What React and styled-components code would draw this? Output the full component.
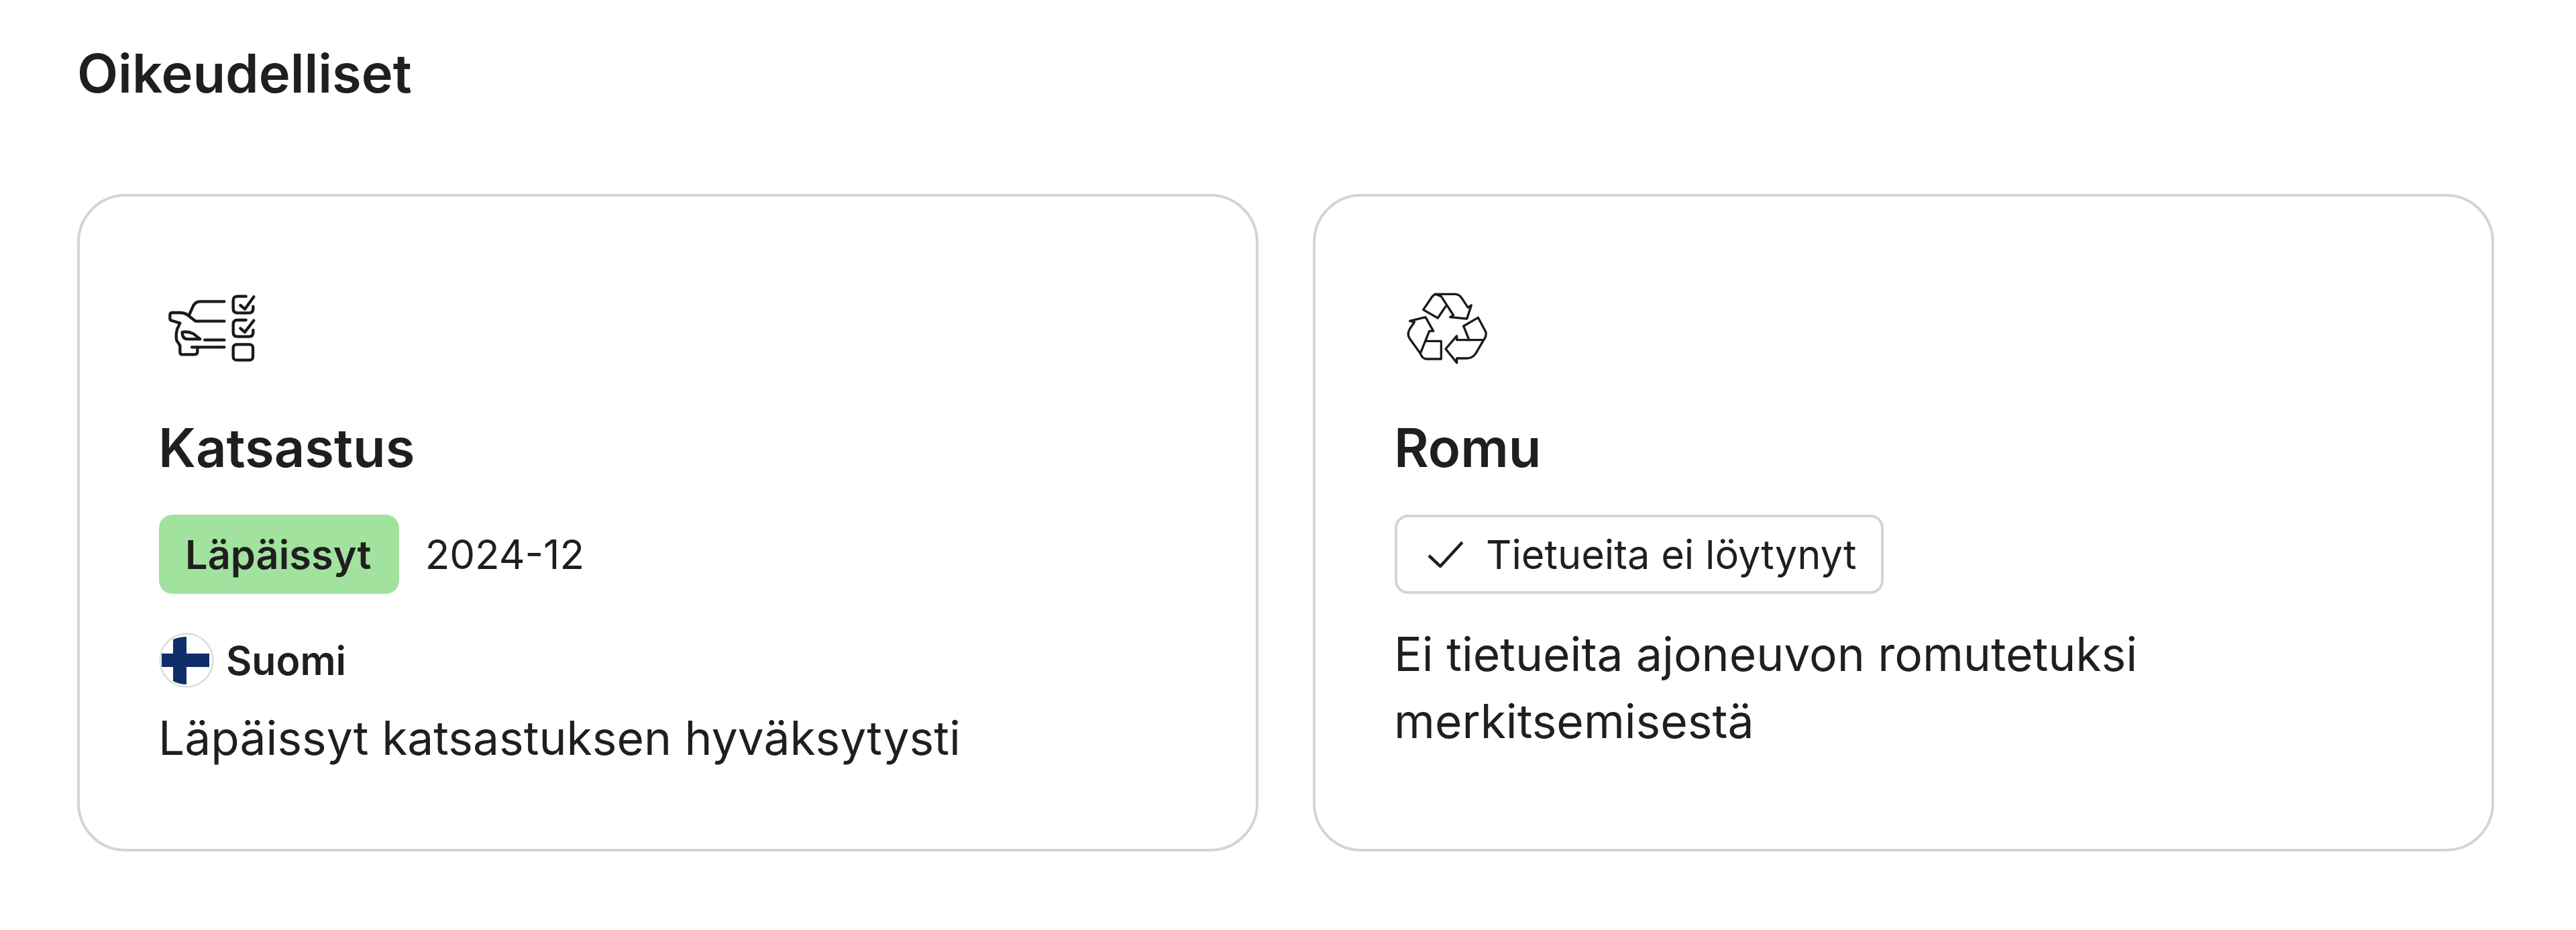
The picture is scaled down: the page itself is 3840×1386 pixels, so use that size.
import React from 'react';
import styled, { createGlobalStyle } from 'styled-components';

const Global = createGlobalStyle`
  html, body {
    margin: 0;
    background: #fff;
    color: #1f1f1f;
    font-family: Inter, "Noto Sans", sans-serif;
  }
`;

const Page = styled.main`
  width: 3840px;
  height: 1386px;
  box-sizing: border-box;
  padding: 59px 122px 0 115px;
`;

const Heading = styled.h2`
  margin: 0;
  font-size: 79.5px;
  line-height: 100px;
  font-weight: 600;
  height: 230px;
`;

const Cards = styled.div`
  display: grid;
  grid-template-columns: 1761px 1761px;
  gap: 81px;
`;

const Card = styled.section`
  box-sizing: border-box;
  height: 980px;
  padding: 116px 118px;
  border: 4px solid #d4d4d4;
  border-radius: 72px;
`;

const Icon = styled.svg`
  display: block;
  width: 160px;
  height: 160px;
  fill: none;
  stroke: #1a1a1a;
  stroke-linecap: round;
  stroke-linejoin: round;
`;

const CardTitle = styled.h3`
  margin: 41px 0 42px -1px;
  font-size: 79.5px;
  line-height: 115px;
  font-weight: 600;
`;

const StatusRow = styled.div`
  display: flex;
  align-items: center;
  gap: 39px;
`;

const Tag = styled.span`
  box-sizing: border-box;
  display: inline-flex;
  align-items: center;
  height: 118px;
  border-radius: 20px;
  font-size: 59.5px;
  padding: ${p => (p.$outlined ? '0 37px 0 46px' : '0 41px 0 39px')};
  gap: 34px;
  font-weight: ${p => (p.$outlined ? 400 : 600)};
  background: ${p => (p.$outlined ? '#fff' : '#a1e29f')};
  border: ${p => (p.$outlined ? '4px solid #d4d4d4' : 'none')};
`;

const DateText = styled.span`
  font-size: 60px;
`;

const Country = styled.div`
  display: flex;
  align-items: center;
  gap: 18px;
  height: 82px;
  margin: 58px 0 25px;
  font-size: 59px;
  font-weight: 600;
`;

const Flag = styled.svg`
  display: block;
  flex: none;
  width: 82px;
  height: 82px;
`;

const Description = styled.p`
  margin: ${p => (p.$tight ? '40px 0 0 -1px' : '0 0 0 -1px')};
  width: 1200px;
  font-size: 69.5px;
  line-height: 100px;
`;

const CarChecklist = () => (
  <Icon viewBox="111 27 480 480" strokeWidth="13">
    <path d="M403 148H295Q272 148 262 172L245 210" />
    <path d="M403 236H275L238 208Q225 198 205 198H170Q160 198 160 210V225Q160 232 170 234L205 245L192 272Q185 300 190 322L205 345V375Q205 385 215 385H270Q283 385 283 372V352H403" />
    <path d="M258 352H283" />
    <path d="M215 285Q240 280 265 292L295 316H240Q215 316 215 285Z" />
    <path d="M316 320H403" />
    <path d="M500 125H462Q443 125 443 144V180Q443 199 462 199H514Q532 199 532 180V170" />
    <path d="M475 165L495 182L535 127" />
    <path d="M500 231H462Q443 231 443 250V286Q443 305 462 305H514Q532 305 532 286V276" />
    <path d="M475 268L495 285L535 233" />
    <rect x="443" y="340" width="88" height="70" rx="15" />
  </Icon>
);

const RecycleSymbol = () => (
  <Icon viewBox="117 27 480 480" strokeWidth="10">
    <path d="M300 115H385Q405 115 415 130L445 175L460 165L440 225L365 218L380 210L325 125Z" />
    <path d="M300 115Q292 118 285 126L245 185L310 222L345 170" />
    <path d="M425 258L490 220L525 285Q528 305 515 320" />
    <path d="M425 258L450 320" />
    <path d="M515 320H395V302L345 360L395 422V402H440Q465 402 480 380Z" />
    <path d="M185 235L255 218L290 280L272 280L232 380L185 315Q170 295 185 270L205 240Z" />
    <path d="M255 325H325V405H262Q240 405 232 380" />
  </Icon>
);

const FinnishFlag = () => (
  <Flag viewBox="0 0 82 82">
    <circle cx="41" cy="41" r="39.5" fill="#fff" stroke="#dcdcdc" strokeWidth="2.5" />
    <path d="M21 10Q30 6 41 6V31H75V51H41V77Q30 77 21 72V51H4V31H21Z" fill="#102f6a" />
  </Flag>
);

const Check = styled.svg`
  width: 52px;
  height: 40px;
  fill: none;
  stroke: #1f1f1f;
  stroke-width: 4.5;
`;

export default function App() {
  return (
    <>
      <Global />
      <Page>
        <Heading>Oikeudelliset</Heading>
        <Cards>
          <Card>
            <CarChecklist />
            <CardTitle>Katsastus</CardTitle>
            <StatusRow>
              <Tag>Läpäissyt</Tag>
              <DateText>2024-12</DateText>
            </StatusRow>
            <Country>
              <FinnishFlag />
              Suomi
            </Country>
            <Description>Läpäissyt katsastuksen hyväksytysti</Description>
          </Card>
          <Card>
            <RecycleSymbol />
            <CardTitle>Romu</CardTitle>
            <Tag $outlined>
              <Check viewBox="0 0 52 40">
                <path d="M1 22L18 38L51 2" />
              </Check>
              Tietueita ei löytynyt
            </Tag>
            <Description $tight>Ei tietueita ajoneuvon romutetuksi merkitsemisestä</Description>
          </Card>
        </Cards>
      </Page>
    </>
  );
}
